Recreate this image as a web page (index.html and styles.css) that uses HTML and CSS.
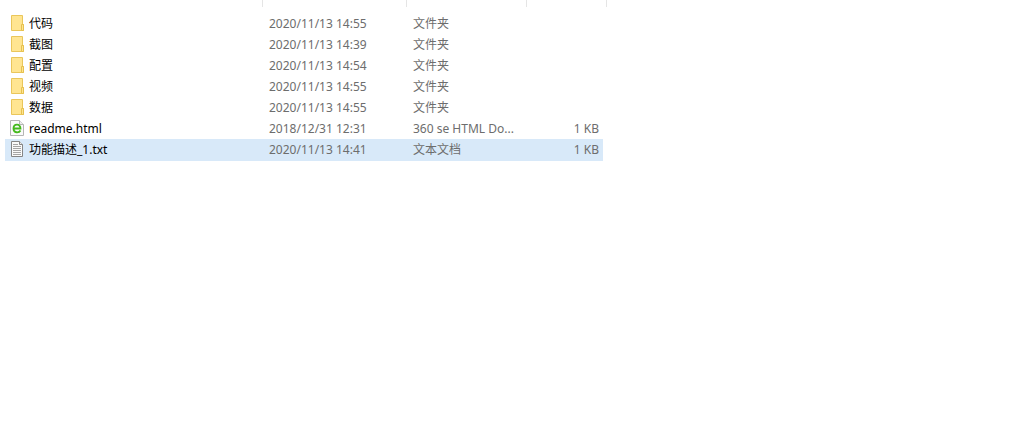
FILE: index.html
```
<!DOCTYPE html>
<html lang="zh-CN">
<head>
  <meta charset="UTF-8">
  <title>Files</title>
  <meta name="viewport" content="width=device-width, initial-scale=1.0">
  <link rel="stylesheet" href="styles.css">
</head>
<body>
  <!-- Shared icons -->
  <svg class="sprite" aria-hidden="true">
    <symbol id="folder" viewBox="0 0 14 16">
      <path d="M1.5.5h11v9h1v6h-12z" fill="#ffe591" stroke="#eac65a"/>
      <path d="M11.5 15.5v-6h2v6z" fill="#ffe48f" stroke="#e6c14f"/>
    </symbol>
    <symbol id="html" viewBox="0 0 14 16">
      <path d="M.5.5h9l4 4v11H.5z" fill="#fafafa" stroke="#b5b5b5"/>
      <path d="M9.5.5v4h4" fill="#eee" stroke="#b5b5b5"/>
      <path d="M3.5 8.5h7C10.500 3.200 3.500 3.500 3.500 8.500c0 4.800 5.500 4.500 7 2" fill="none" stroke="#44b91d" stroke-width="1.800"/>
    </symbol>
    <symbol id="txt" viewBox="0 0 14 16">
      <path d="M1.5.5h8l3 3v12h-11z" fill="#fafafa" stroke="#858585"/>
      <path d="M9.5.5v3h3" fill="#eee" stroke="#858585"/>
      <path d="M3 3.5h5M3 5.5h8M3 7.5h8M3 9.5h8M3 11.5h8M3 13.5h8" stroke="#a5a5a5"/>
    </symbol>
  </svg>

  <main>
    <table class="files">
      <colgroup>
        <col class="col-name">
        <col class="col-date">
        <col class="col-type">
        <col class="col-size">
        <col class="col-end">
      </colgroup>
      <thead>
        <tr>
          <th></th>
          <th></th>
          <th></th>
          <th colspan="2"></th>
        </tr>
      </thead>
      <tbody>
        <tr>
          <td><div class="name"><svg class="icon"><use href="#folder"/></svg>代码</div></td>
          <td>2020/11/13 14:55</td>
          <td>文件夹</td>
          <td class="size"></td>
        </tr>
        <tr>
          <td><div class="name"><svg class="icon"><use href="#folder"/></svg>截图</div></td>
          <td>2020/11/13 14:39</td>
          <td>文件夹</td>
          <td class="size"></td>
        </tr>
        <tr>
          <td><div class="name"><svg class="icon"><use href="#folder"/></svg>配置</div></td>
          <td>2020/11/13 14:54</td>
          <td>文件夹</td>
          <td class="size"></td>
        </tr>
        <tr>
          <td><div class="name"><svg class="icon"><use href="#folder"/></svg>视频</div></td>
          <td>2020/11/13 14:55</td>
          <td>文件夹</td>
          <td class="size"></td>
        </tr>
        <tr>
          <td><div class="name"><svg class="icon"><use href="#folder"/></svg>数据</div></td>
          <td>2020/11/13 14:55</td>
          <td>文件夹</td>
          <td class="size"></td>
        </tr>
        <tr>
          <td><div class="name"><svg class="icon"><use href="#html"/></svg>readme.html</div></td>
          <td>2018/12/31 12:31</td>
          <td>360 se HTML Do...</td>
          <td class="size">1 KB</td>
        </tr>
        <tr class="selected">
          <td><div class="name"><svg class="icon"><use href="#txt"/></svg>功能描述_1.txt</div></td>
          <td>2020/11/13 14:41</td>
          <td>文本文档</td>
          <td class="size">1 KB</td>
        </tr>
      </tbody>
    </table>
  </main>
</body>
</html>
```
FILE: styles.css
```
:root {
  --text-color: #000;
  --muted: #6d6d6d;
  --line: #e5e5e5;
  --selected: #d8e9f9;
}

body {
  margin: 0;
  background: #fff;
  color: var(--text-color);
  font-family: 'Noto Sans', 'Noto Sans CJK SC', sans-serif;
  font-size: 12px;
  line-height: 20px;
}

main {
  padding-left: 5px;
}

.sprite {
  display: none;
}

/* File list */
.files {
  table-layout: fixed;
  width: 602px;
  border-collapse: separate;
  border-spacing: 0;
}

.col-name {
  width: 258px;
}

.col-date {
  width: 144px;
}

.col-type {
  width: 120px;
}

.col-size {
  width: 76px;
}

.col-end {
  width: 4px;
}

th {
  height: 7px;
  padding: 0;
  border-right: 1px solid var(--line);
}

/* Space between the header and the first row */
tbody::before {
  content: "";
  display: table-row;
  height: 6px;
}

td {
  height: 21px;
  padding: 0 4px 0 6px;
  color: var(--muted);
  white-space: nowrap;
}

.name {
  display: flex;
  align-items: center;
  gap: 5px;
  color: var(--text-color);
}

.icon {
  width: 14px;
  height: 16px;
  margin-bottom: 2px;
}

td:first-child {
  padding-left: 5px;
}

.size {
  text-align: right;
}

.selected td {
  background: var(--selected);
  border-bottom: 1px solid var(--selected);
}
```
